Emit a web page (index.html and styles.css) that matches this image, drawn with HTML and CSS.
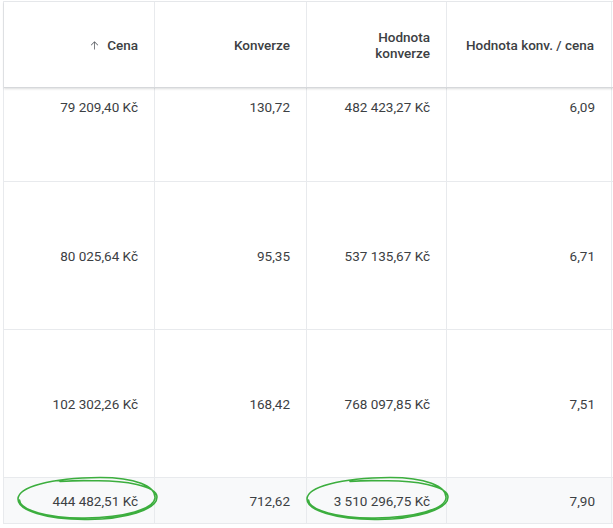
FILE: index.html
```html
<!DOCTYPE html>
<html lang="cs">
<head>
<meta charset="utf-8">
<title>Tabulka</title>
<link rel="stylesheet" href="styles.css">
</head>
<body>
<div class="page">
  <div class="table">
    <div class="row head">
      <div class="cell"><span class="sort"><svg viewBox="0 0 24 24" width="13" height="13"><path d="M12.75 19.5V6.7l5.1 5.1.95-.95L12 4.05 5.2 10.85l.95.95 5.1-5.1v12.8z" fill="#5f6368"/></svg></span>Cena</div>
      <div class="cell">Konverze</div>
      <div class="cell">Hodnota konverze</div>
      <div class="cell">Hodnota konv. / cena</div>
    </div>
    <div class="row first">
      <div class="cell">79 209,40 Kč</div>
      <div class="cell">130,72</div>
      <div class="cell">482 423,27 Kč</div>
      <div class="cell">6,09</div>
    </div>
    <div class="row tall">
      <div class="cell">80 025,64 Kč</div>
      <div class="cell">95,35</div>
      <div class="cell">537 135,67 Kč</div>
      <div class="cell">6,71</div>
    </div>
    <div class="row tall">
      <div class="cell">102 302,26 Kč</div>
      <div class="cell">168,42</div>
      <div class="cell">768 097,85 Kč</div>
      <div class="cell">7,51</div>
    </div>
    <div class="row total">
      <div class="cell">444 482,51 Kč</div>
      <div class="cell">712,62</div>
      <div class="cell">3 510 296,75 Kč</div>
      <div class="cell">7,90</div>
    </div>
  </div>
  <svg class="marks" viewBox="0 0 613 528" width="613" height="528">
    <g fill="none" stroke="#3cae3e" stroke-width="1.6" stroke-linecap="round">
      <path d="M60 481.5 C 75 480.5 85 480.5 92 480.8 C 125 480 157 486 157 497 C 157 510 125 519 88 519.5 C 45 520 18 510 18 499 C 18 487 50 478 100 477.5 C 135 477.5 156 486 155 498 C 154 509 125 517.5 85 518 C 48 518.5 20 510 19.5 500"/>
      <path d="M350 481.5 C 362 480.5 372 480.5 381 480.8 C 415 480 448 486 448 497 C 448 510 415 519 378 519.5 C 335 520 307 510 307 499 C 307 487 340 478 390 477.5 C 425 477.5 447 486 446 498 C 445 509 415 517.5 375 518 C 338 518.5 309 510 308.5 500"/>
    </g>
  </svg>
</div>
</body>
</html>
```
FILE: styles.css
```css
html, body {
  margin: 0;
  padding: 0;
  background: #ffffff;
}
.page {
  position: relative;
  width: 613px;
  height: 528px;
  overflow: hidden;
  font-family: Roboto, "Noto Sans", Arial, sans-serif;
  font-size: 13.5px;
  color: #3c4043;
}
.table {
  margin: 1px 0 0 3px;
  width: 609px;
  border-top: 1px solid #e8eaed;
  border-left: 1px solid #e8eaed;
}
.row {
  display: grid;
  grid-template-columns: 151px 152px 140px 165px;
  border-bottom: 1px solid #e8eaed;
}
.cell {
  border-right: 1px solid #e8eaed;
  padding: 0 16px;
  display: flex;
  align-items: center;
  justify-content: flex-end;
  text-align: right;
  line-height: 16px;
}
.head {
  height: 85px;
  font-weight: 500;
  border-bottom: 1px solid #d6d8db;
  box-shadow: 0 1px 2px rgba(60, 64, 67, 0.18);
  position: relative;
  z-index: 1;
}
.head .cell:last-child {
  padding-right: 17px;
}
.sort {
  display: inline-flex;
  margin-right: 6px;
  margin-top: 2px;
}
.first {
  height: 93px;
}
.first .cell {
  align-items: flex-start;
  padding-top: 11px;
}
.tall {
  height: 147px;
}
.total {
  height: 45px;
  background: #f8f9fa;
}
.total .cell {
  padding-top: 0;
}
.marks {
  position: absolute;
  left: 0;
  top: 0;
  pointer-events: none;
}
```
